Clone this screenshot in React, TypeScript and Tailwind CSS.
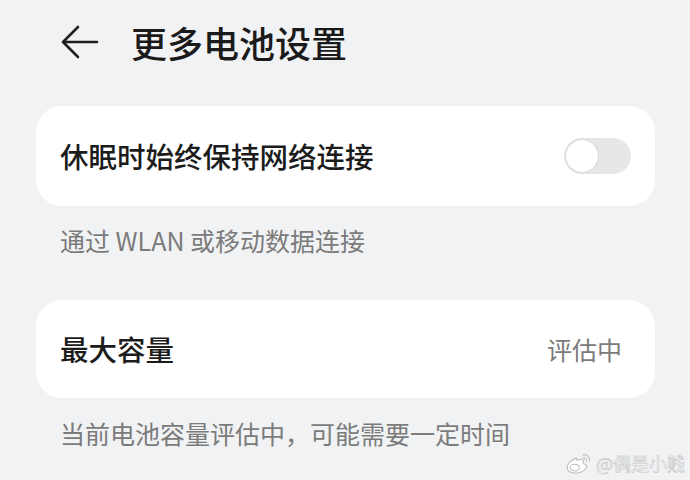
import React from "react";

const font = { fontFamily: '"Noto Sans CJK SC", "Noto Sans", sans-serif' };

export default function App() {
  return (
    <div
      className="w-[690px] h-[480px] bg-[#f1f2f4] overflow-hidden relative flex flex-col"
      style={font}
    >
      {/* Header */}
      <div className="h-[84px] flex items-center pl-[61px] shrink-0">
        <svg width="38" height="34" viewBox="0 0 38 34" className="shrink-0">
          <path
            d="M17 2 L2 17 L17 32 M2 17 L36 17"
            fill="none"
            stroke="#1e1e1e"
            strokeWidth="2.6"
            strokeLinecap="round"
            strokeLinejoin="round"
          />
        </svg>
        <div className="ml-[32px] text-[36px] leading-none font-medium text-[#1a1a1a]">
          更多电池设置
        </div>
      </div>

      {/* Card 1 */}
      <div className="mt-[22px] ml-[36px] w-[619px] h-[100px] bg-white rounded-[26px] flex items-center justify-between pl-[24px] pr-[24px] shrink-0">
        <div className="text-[28.5px] leading-none font-medium text-[#1c1c1c]">
          休眠时始终保持网络连接
        </div>
        <div className="w-[67px] h-[36px] rounded-full bg-[#e7e7e7] flex items-center pl-[2px]">
          <div className="w-[32px] h-[32px] rounded-full bg-white shadow-[0_0_2px_rgba(0,0,0,0.18)]" />
        </div>
      </div>

      <div className="mt-[17px] pl-[60px] h-[34px] leading-[34px] text-[25px] text-[#7b7b7b] shrink-0">
        通过 WLAN 或移动数据连接
      </div>

      {/* Card 2 */}
      <div className="mt-[43px] ml-[36px] w-[619px] h-[98px] bg-white rounded-[26px] flex items-center justify-between pl-[24px] pr-[33px] shrink-0">
        <div className="text-[28.5px] leading-none font-medium text-[#1c1c1c]">
          最大容量
        </div>
        <div className="text-[25px] leading-none text-[#7b7b7b]">评估中</div>
      </div>

      <div className="mt-[18px] pl-[60px] h-[34px] leading-[34px] text-[25px] text-[#7b7b7b] shrink-0">
        当前电池容量评估中，可能需要一定时间
      </div>

      {/* Watermark */}
      <div className="absolute left-[564px] top-[451px] flex items-center gap-[3px] whitespace-nowrap">
        <svg width="29" height="24" viewBox="0 0 30 26">
          <path
            d="M12 8 C6 10 2 15 3 19 C4 24 12 25 17 23 C23 21 25 17 23 15 C22 14 20 14 20 13 C21 11 20 9 18 9 C16 9 14 10 13 10 C13 8 13 7 12 8 Z"
            fill="white"
            stroke="#bdbdbd"
            strokeWidth="1.2"
          />
          <ellipse cx="11" cy="18" rx="5" ry="3.6" fill="none" stroke="#bdbdbd" strokeWidth="1.1" />
          <path d="M20 4 C24 3 28 7 27 11" fill="none" stroke="#bdbdbd" strokeWidth="1.3" strokeLinecap="round" />
          <path d="M20 7.5 C22 7 24 9 23.5 11" fill="none" stroke="#bdbdbd" strokeWidth="1.2" strokeLinecap="round" />
        </svg>
        <div className="text-[18px] leading-none text-white [-webkit-text-stroke:0.6px_#c4c4c4]">
          @偶是小贱
        </div>
      </div>
    </div>
  );
}
